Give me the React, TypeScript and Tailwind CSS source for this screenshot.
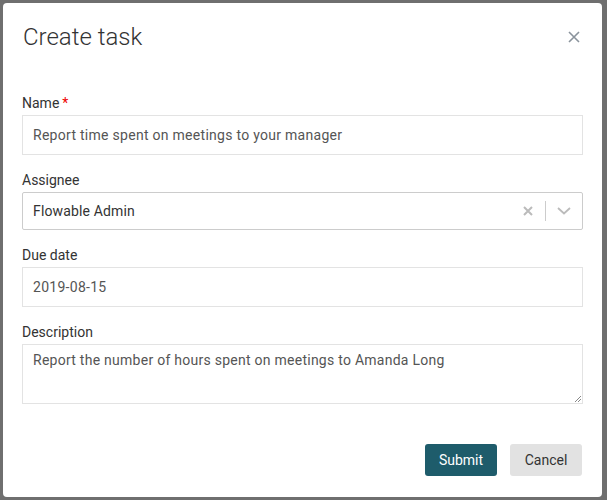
import React from 'react';

const Field: React.FC<{ label: string; required?: boolean; children: React.ReactNode }> = ({ label, required, children }) => (
  <div className="flex flex-col">
    <label className="text-[14px] leading-[20px] text-[#333] mb-[2px]">
      {label}
      {required && <span className="text-[#e00] ml-[3px]">*</span>}
    </label>
    {children}
  </div>
);

const App: React.FC = () => {
  return (
    <div className="h-[500px] w-[607px] bg-[#6f6f6f] pt-[3px] pl-[3px] pr-[5px] pb-[3px] font-['Roboto',sans-serif]">
      <div className="h-full bg-white rounded-[4px] flex flex-col px-[19px]">
        <div className="flex items-center justify-between pt-[20px]">
          <h1 className="text-[24px] leading-[28px] font-light text-[#333] ml-[1px]">Create task</h1>
          <button className="text-[#8a939c] mr-[3px]">
            <svg width="12" height="12" viewBox="0 0 12 12" fill="none" stroke="currentColor" strokeWidth="1.6">
              <path d="M1 1l10 10M11 1L1 11" />
            </svg>
          </button>
        </div>

        <div className="flex flex-col gap-[15px] mt-[42px]">
          <Field label="Name" required>
            <div className="h-[40px] border border-[#e3e3e3] flex items-center px-[10px] text-[14px] tracking-[0.28px] text-[#555]">
              Report time spent on meetings to your manager
            </div>
          </Field>
          <Field label="Assignee">
            <div className="h-[38px] border border-[#ccc] rounded-[2px] flex items-center pl-[10px] text-[14px] tracking-[0.15px] text-[#333]">
              <span className="flex-1">Flowable Admin</span>
              <svg width="10" height="10" viewBox="0 0 10 10" className="text-[#bbb] mr-[12px]" stroke="currentColor" strokeWidth="2">
                <path d="M1 1l8 8M9 1L1 9" />
              </svg>
              <div className="w-px h-[20px] bg-[#ccc]" />
              <svg width="14" height="8" viewBox="0 0 14 8" fill="none" className="text-[#bbb] mx-[11px]" stroke="currentColor" strokeWidth="1.8">
                <path d="M1 1l6 5.5L13 1" />
              </svg>
            </div>
          </Field>
          <Field label="Due date">
            <div className="h-[40px] border border-[#e3e3e3] flex items-center px-[10px] text-[14px] tracking-[0.28px] text-[#555]">
              2019-08-15
            </div>
          </Field>
          <Field label="Description">
            <div className="relative h-[60px] border border-[#e3e3e3] px-[10px] pt-[5px] text-[14px] leading-[20px] tracking-[0.26px] text-[#555]">
              Report the number of hours spent on meetings to Amanda Long
              <svg width="7" height="7" viewBox="0 0 7 7" className="absolute right-[1px] bottom-[1px] text-[#888]" stroke="currentColor" strokeWidth="1">
                <path d="M7 1L1 7M7 4L4 7" />
              </svg>
            </div>
          </Field>
        </div>

        <div className="flex justify-end gap-[13px] mt-[40px] mr-[1px]">
          <button className="h-[32px] w-[72px] rounded-[3px] bg-[#1e5c6b] text-white text-[14px]">Submit</button>
          <button className="h-[32px] w-[72px] rounded-[3px] bg-[#e2e2e2] text-[#333] text-[14px]">Cancel</button>
        </div>
      </div>
    </div>
  );
};

export default App;
